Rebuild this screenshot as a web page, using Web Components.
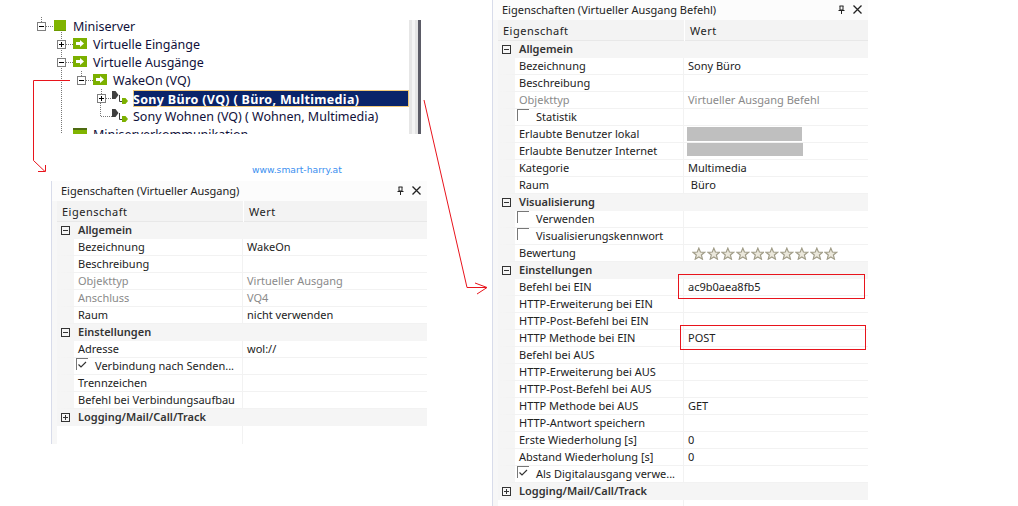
<!DOCTYPE html>
<html><head><meta charset="utf-8"><style>
html,body{margin:0;padding:0;background:#fff}
body{width:1018px;height:506px;position:relative;overflow:hidden;font-family:"Noto Sans","Liberation Sans",sans-serif}
</style></head><body>
<tree-pane style="left:0;top:17px">
<tree-row depth="0" exp="-" icon="square">Miniserver</tree-row>
<tree-row depth="1" exp="+" icon="arrow">Virtuelle Eingänge</tree-row>
<tree-row depth="1" exp="-" icon="arrow">Virtuelle Ausgänge</tree-row>
<tree-row depth="2" exp="-" icon="arrow">WakeOn (VQ)</tree-row>
<tree-row depth="3" exp="+" icon="cmd" selected>Sony Büro (VQ) ( Büro, Multimedia)</tree-row>
<tree-row depth="3" icon="cmd">Sony Wohnen (VQ) ( Wohnen, Multimedia)</tree-row>
<tree-row depth="1" icon="folder">Miniserverkommunikation</tree-row>
</tree-pane>
<web-mark>www.smart-harry.at</web-mark>
<prop-panel heading="Eigenschaften (Virtueller Ausgang)" style="left:51px;top:181px;height:263px">
<prop-group label="Allgemein" state="-"></prop-group>
<prop-row label="Bezeichnung" value="WakeOn"></prop-row>
<prop-row label="Beschreibung"></prop-row>
<prop-row label="Objekttyp" value="Virtueller Ausgang" muted></prop-row>
<prop-row label="Anschluss" value="VQ4" muted></prop-row>
<prop-row label="Raum" value="nicht verwenden"></prop-row>
<prop-group label="Einstellungen" state="-"></prop-group>
<prop-row label="Adresse" value="wol://"></prop-row>
<prop-row label="Verbindung nach Senden..." check="on"></prop-row>
<prop-row label="Trennzeichen"></prop-row>
<prop-row label="Befehl bei Verbindungsaufbau"></prop-row>
<prop-group label="Logging/Mail/Call/Track" state="+"></prop-group>
</prop-panel>
<prop-panel heading="Eigenschaften (Virtueller Ausgang Befehl)" style="left:492px;top:0;height:506px">
<prop-group label="Allgemein" state="-"></prop-group>
<prop-row label="Bezeichnung" value="Sony Büro"></prop-row>
<prop-row label="Beschreibung"></prop-row>
<prop-row label="Objekttyp" value="Virtueller Ausgang Befehl" muted></prop-row>
<prop-row label="Statistik" check="off"></prop-row>
<prop-row label="Erlaubte Benutzer lokal"><gray-bar style="--w:115px"></gray-bar></prop-row>
<prop-row label="Erlaubte Benutzer Internet"><gray-bar style="--w:116px;height:13px;margin-top:-3px"></gray-bar></prop-row>
<prop-row label="Kategorie" value="Multimedia"></prop-row>
<prop-row label="Raum" value=" Büro"></prop-row>
<prop-group label="Visualisierung" state="-"></prop-group>
<prop-row label="Verwenden" check="off"></prop-row>
<prop-row label="Visualisierungskennwort" check="off"></prop-row>
<prop-row label="Bewertung"><star-rating></star-rating></prop-row>
<prop-group label="Einstellungen" state="-"></prop-group>
<prop-row label="Befehl bei EIN" value="ac9b0aea8fb5"></prop-row>
<prop-row label="HTTP-Erweiterung bei EIN"></prop-row>
<prop-row label="HTTP-Post-Befehl bei EIN"></prop-row>
<prop-row label="HTTP Methode bei EIN" value="POST"></prop-row>
<prop-row label="Befehl bei AUS"></prop-row>
<prop-row label="HTTP-Erweiterung bei AUS"></prop-row>
<prop-row label="HTTP-Post-Befehl bei AUS"></prop-row>
<prop-row label="HTTP Methode bei AUS" value="GET"></prop-row>
<prop-row label="HTTP-Antwort speichern"></prop-row>
<prop-row label="Erste Wiederholung [s]" value="0"></prop-row>
<prop-row label="Abstand Wiederholung [s]" value="0"></prop-row>
<prop-row label="Als Digitalausgang verwe..." check="on"></prop-row>
<prop-group label="Logging/Mail/Call/Track" state="+"></prop-group>
</prop-panel>
<red-annotations></red-annotations>
<script>
function def(name, css, render){
  customElements.define(name, class extends HTMLElement{
    connectedCallback(){
      if(!this.shadowRoot){this.attachShadow({mode:'open'});}
      this.shadowRoot.innerHTML='<style>'+css+'</style>'+render(this);
    }
  });
}
const esc=s=>(s||'').replace(/&/g,'&amp;').replace(/</g,'&lt;');
const expBox=(st)=>`<svg width="9" height="9" viewBox="0 0 9 9"><rect x=".5" y=".5" width="8" height="8" fill="#fff" stroke="#7f7f7f"/><path d="M2 4.5h5${st==='+'?'M4.5 2v5':''}" stroke="#000"/></svg>`;
const icons={
 square:`<svg width="14" height="14" viewBox="0 0 14 14"><rect x="1" y="1" width="12" height="11" fill="#80b400"/><rect x="1" y="11" width="12" height="1" fill="#6c9a00"/></svg>`,
 arrow:`<svg width="14" height="14" viewBox="0 0 14 14"><rect x="0" y="1" width="14" height="11" fill="#7cb000"/><path d="M3 5h4V3l4 3.5-4 3.5V8H3z" fill="#fff"/></svg>`,
 folder:`<svg width="14" height="14" viewBox="0 0 14 14"><rect x="0" y="1" width="14" height="3" fill="#4d6b10"/><rect x="0" y="3" width="14" height="11" fill="#80b400"/></svg>`,
 cmd:`<svg width="16" height="16" viewBox="0 0 16 16" style="margin-left:-1px"><path d="M0 1h3.5L6.5 5 3.5 9H0z" fill="#3f3f3f"/><path d="M7.5 5v6.5H10" fill="none" stroke="#3f3f3f"/><path d="M10 8h3.5L16 11l-2.5 3H10z" fill="#7cb000"/></svg>`
};
def('tree-pane',`:host{position:absolute;display:flex;width:422px;height:117px}
 .tree{position:relative;width:409px;height:117px;overflow:hidden;display:flex;flex-direction:column}
 .lines{position:absolute;left:0;top:0}
 .bar{width:13px;height:114px;margin-top:3px;background:linear-gradient(90deg,#e6e6e6 0 3px,#f4f4f4 3px 6px,#e4e4e4 6px 9px,#5b5b66 9px 12px,#fff 12px)}`,
 ()=>`<div class="tree"><svg class="lines" width="409" height="117" fill="none" stroke="#777" stroke-dasharray="1 1"><path d="M41.5 0v5M46 9.5h7M61.5 15v8M66 27.5h7M61.5 33v9M66 45.5h7M61.5 51v66M81.5 54v5M86 63.5h7M101.5 72v5M106 81.5h6M100.5 86v13.5H112"/></svg><slot></slot></div><div class="bar"></div>`);
def('tree-row',`:host{display:flex;align-items:center;height:18px;flex:none;font-size:12.5px;color:#10103a;position:relative;white-space:nowrap}
 .box{width:16px;flex:none;display:flex;align-items:center;height:9px}
 .icon{width:20px;flex:none;display:flex;height:16px;align-items:center}
 .t{flex:1;line-height:20px;height:18px}
 :host([selected]) .t{background:#0a246a;color:#fff;font-weight:700;box-shadow:inset 0 0 0 1px #f0c878;height:17px;line-height:19px;letter-spacing:.32px}
 svg{display:block}`,
 h=>{const d=+h.getAttribute('depth');const e=h.getAttribute('exp');h.style.paddingLeft=(37+20*d)+'px';
 return `<span class="box">${e?expBox(e):''}</span><span class="icon">${icons[h.getAttribute('icon')]}</span><span class="t"><slot></slot></span>`});
def('web-mark',`:host{position:absolute;left:252px;top:163px;font:9.2px/14px "DejaVu Sans",sans-serif;color:#3a8ff0}`,()=>`<slot></slot>`);
def('prop-panel',`:host{position:absolute;display:flex;flex-direction:column;width:376px;overflow:hidden;background:#f7f7f7;font-size:11px;box-sizing:border-box;border-left:1px solid #d8dcea;color:#222}
 .title{height:19px;padding:0 6px 1px 9px;flex:none;display:flex;align-items:center;justify-content:space-between;background:#fcfcfc}
 .tools{display:flex;gap:7px;align-items:center}
 .head{height:20px;flex:none;background:#f3f3f3;display:grid;grid-template-columns:186px 1fr;border-bottom:1px solid #e8e8e8;margin-left:5px;font-size:11px}
 .head span{padding-left:5px;line-height:21px;letter-spacing:.5px}
 .head span+span{border-left:1px solid #fff;padding-left:5px}
 .body{flex:1;display:flex;flex-direction:column;margin-left:5px;background:#fff}
 .rest{flex:1;margin-left:185px;border-left:1px solid #f2f2f2}
 svg{display:block}`,
 h=>`<div class="title"><span>${esc(h.getAttribute('heading'))}</span><span class="tools"><svg width="9" height="9" viewBox="0 0 9 9"><path d="M2.5 1h4M3 1v4h3V1M1.5 5.5h6M4.5 5.5V9" stroke="#222" fill="none"/></svg><svg width="9" height="9" viewBox="0 0 9 9"><path d="M.5.5l8 8M8.5.5l-8 8" stroke="#222" stroke-width="1.3" fill="none"/></svg></span></div><div class="head"><span>Eigenschaft</span><span>Wert</span></div><div class="body"><slot></slot><div class="rest"></div></div>`);
def('prop-group',`:host{display:flex;align-items:center;height:15px;padding-bottom:2px;background:#f5f5f5;font-weight:600;color:#333;flex:none;font-size:11px}
 .b{width:21px;flex:none;padding-left:4px;box-sizing:border-box}
 svg{display:block}`,
 h=>`<span class="b"><svg width="9" height="9" viewBox="0 0 9 9" style="margin-top:2px"><rect x=".5" y=".5" width="8" height="8" fill="none" stroke="#333"/><path d="M2 4.5h5${h.getAttribute('state')==='+'?'M4.5 2v5':''}" stroke="#333"/></svg></span><span>${esc(h.getAttribute('label'))}</span>`);
def('prop-row',`:host{display:grid;grid-template-columns:168px 1fr;height:17px;border-left:17px solid #f5f5f5;background:#fff;flex:none;box-sizing:border-box;border-bottom:1px solid #f2f2f2;color:#222;position:relative}
 .l,.v{display:flex;align-items:center;height:15px;white-space:pre}
 .l{padding-left:4px}
 .v{padding-left:4px;border-left:1px solid #f2f2f2;height:16px;align-items:flex-start;line-height:15px}
 .v.stack{align-items:center}
 .muted{color:#8a8a8a}
 .c{width:12px;height:12px;flex:none;margin:0 7px 0 -2px;border-left:1px solid #777;border-top:1px solid #777;box-sizing:border-box;display:block;align-self:flex-start}
 .c svg{display:block}`,
 h=>{const m=h.hasAttribute('muted')?' muted':'';const ck=h.getAttribute('check');const st=h.children.length?' stack':'';
 const cb=ck?`<span class="c">${ck==='on'?'<svg width="11" height="11" viewBox="0 0 11 11"><path d="M1.5 5.5l2.5 2.5L9 3" fill="none" stroke="#333" stroke-width="1.2"/></svg>':''}</span>`:'';
 return `<span class="l${m}">${cb}${esc(h.getAttribute('label'))}</span><span class="v${m}${st}">${esc(h.getAttribute('value'))}<slot></slot></span>`});
def('gray-bar',`:host{display:block;width:var(--w);height:14px;background:#bfbfbf;margin-left:-1px}`,()=>``);
def('star-rating',`:host{display:flex;gap:1px;margin-left:4px}svg{display:block}`,()=>{
 const s=`<svg width="13.7" height="13" viewBox="0 0 14 13"><polygon points="7,1 8.6,5 13,5.3 9.6,8 10.7,12.3 7,10 3.3,12.3 4.4,8 1,5.3 5.4,5" fill="#ebe8dc" stroke="#a09c88" stroke-width="1.2"/></svg>`;
 return s.repeat(10)});
def('red-annotations',`:host{position:absolute;left:0;top:0;width:1018px;height:506px;pointer-events:none}svg{display:block}`,
 ()=>`<svg width="1018" height="506" fill="none" stroke="#e8141c"><path d="M70 80.5H33.5V160.5L45 171.5M45.5 165V171.5H38"/><path d="M424 100L467 287.5H486M475 283l12 4.5-10 6.5"/><rect x="678.5" y="274.5" width="186" height="24"/><rect x="680.5" y="325.5" width="185" height="24"/></svg>`);
</script>
</body></html>
